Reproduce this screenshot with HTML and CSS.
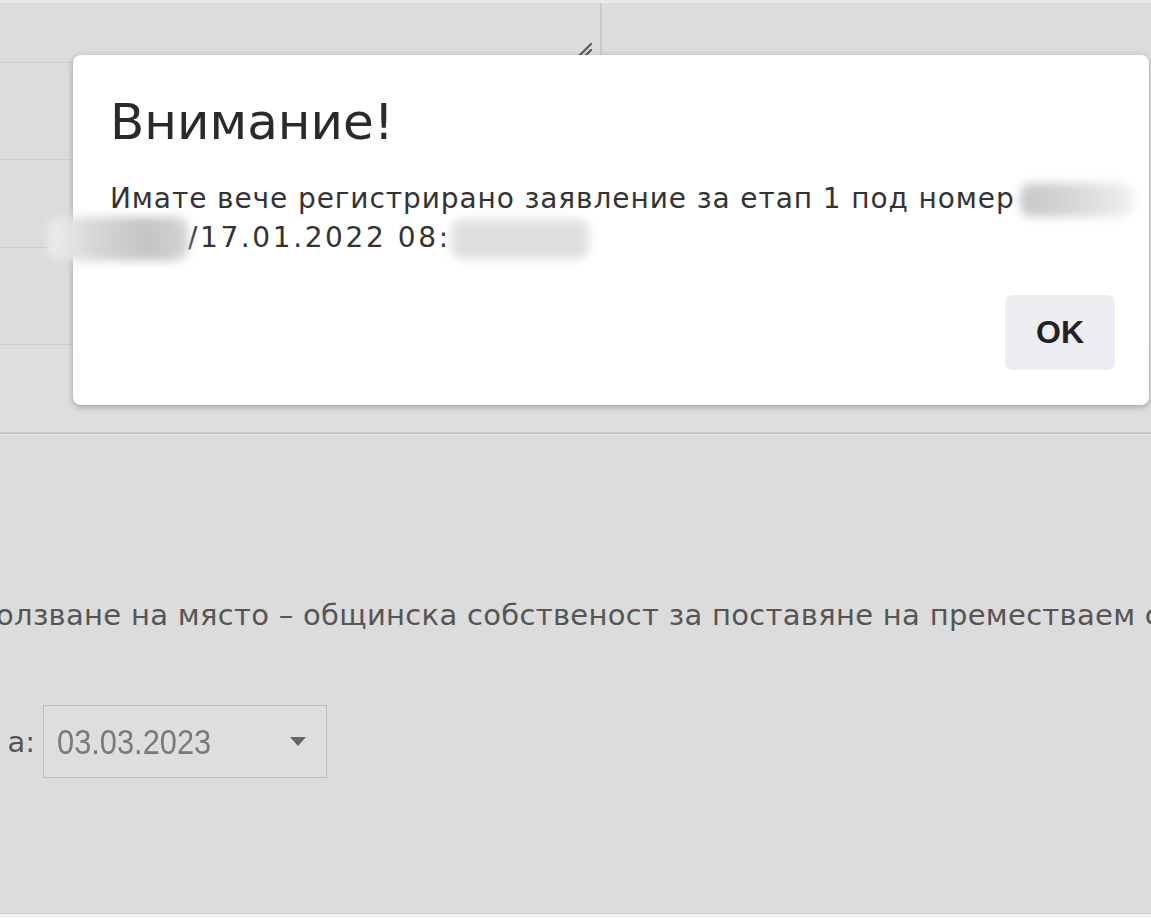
FILE: index.html
```html
<!DOCTYPE html>
<html lang="bg">
<head>
<meta charset="utf-8">
<title>Внимание</title>
<link rel="stylesheet" href="styles.css">
</head>
<body>
<div class="page">
  <div class="top-strip"></div>
  <div class="table">
    <div class="col-left">
      <div class="cell c1">
        <svg class="resize" width="18" height="18" viewBox="0 0 18 18"><path d="M3 16 L15 4 M9 16 L15 10" stroke="#5e5e5e" stroke-width="2.4" stroke-linecap="round"/></svg>
      </div>
      <div class="cell c2"></div>
      <div class="cell c3"></div>
      <div class="cell c4"></div>
    </div>
    <div class="col-right">
      <div class="rcell"></div>
    </div>
    <div class="row-last"></div>
  </div>
  <div class="divider"></div>
  <div class="content">
    <p class="desc">олзване на място – общинска собственост за поставяне на преместваем с</p>
    <div class="date-row">
      <span class="label">а:</span>
      <div class="select">
        <span class="val">03.03.2023</span>
        <span class="arrow"></span>
      </div>
    </div>
  </div>
  <div class="bottom"></div>
</div>

<div class="dialog" role="dialog">
  <h1 class="title">Внимание!</h1>
  <p class="msg">Имате вече регистрирано заявление за етап 1 под номер <span class="redact r1"></span><br><span class="redact r2"></span><span class="stamp">/17.01.2022 08:</span><span class="redact r3"></span></p>
  <div class="actions">
    <button class="ok">OK</button>
  </div>
</div>
</body>
</html>
```
FILE: styles.css
```css
html, body {
  margin: 0;
  padding: 0;
}
body {
  width: 1151px;
  height: 918px;
  overflow: hidden;
  background: #dcdcdc;
  font-family: "DejaVu Sans", "Noto Sans", sans-serif;
  position: relative;
}
.page {
  display: flex;
  flex-direction: column;
  height: 918px;
}
.top-strip {
  height: 3px;
  background: #e8e8e8;
}
.table {
  display: grid;
  grid-template-columns: 600px 1fr;
}
.col-left {
  display: flex;
  flex-direction: column;
}
.cell {
  box-sizing: border-box;
  border-bottom: 1px solid #cecece;
  position: relative;
}
.c1 { height: 60px; }
.c2 { height: 97px; }
.c3 { height: 88px; }
.c4 { height: 97px; }
.row-last {
  grid-column: 1 / 3;
  height: 87px;
  background: #dedede;
}
.resize {
  position: absolute;
  right: 6px;
  bottom: 4px;
}
.rcell {
  height: 60px;
  border-left: 2px solid #cacaca;
}
.divider {
  height: 2px;
  background: #c6c6c6;
  border-bottom: 1px solid #e6e6e6;
}
.content {
  flex: 1;
  padding-top: 160px;
  color: #555;
}
.desc {
  margin: 0 0 0 -4px;
  font-size: 29px;
  line-height: 40px;
  letter-spacing: 0.3px;
  white-space: nowrap;
}
.date-row {
  display: flex;
  align-items: center;
  gap: 8px;
  margin-top: 70px;
}
.label {
  font-size: 29px;
  margin-left: -5px;
  width: 40px;
  text-align: right;
  white-space: nowrap;
}
.select {
  box-sizing: border-box;
  width: 284px;
  height: 73px;
  border: 1px solid #bcbcbc;
  background: #dedede;
  display: flex;
  align-items: center;
  justify-content: space-between;
  padding: 0 20px 0 13px;
}
.val {
  display: inline-block;
  font-family: "Liberation Sans", Arial, sans-serif;
  font-size: 35px;
  color: #7a7a7a;
  transform: scaleX(0.88);
  transform-origin: left center;
}
.arrow {
  width: 0;
  height: 0;
  border-left: 8px solid transparent;
  border-right: 8px solid transparent;
  border-top: 9px solid #666;
}
.bottom {
  height: 4px;
  border-top: 1px solid #cfcfcf;
  background: #f3f3f3;
}

.dialog {
  position: absolute;
  left: 73px;
  top: 55px;
  width: 1076px;
  height: 350px;
  box-sizing: border-box;
  background: #fff;
  border-radius: 8px;
  box-shadow: 0 2px 6px rgba(0,0,0,0.28);
  padding: 37px 34px 35px 37px;
  display: flex;
  flex-direction: column;
}
.title {
  margin: 0;
  font-weight: normal;
  font-size: 50px;
  line-height: 60px;
  color: #2a2a2a;
}
.msg {
  margin: 28px 0 0;
  font-size: 28px;
  line-height: 37px;
  letter-spacing: 0.9px;
  color: #333;
  white-space: nowrap;
}
.stamp {
  letter-spacing: 2.6px;
}
.redact {
  display: inline-block;
  height: 34px;
  vertical-align: middle;
  filter: blur(5px);
  border-radius: 12px;
}
.r1 {
  width: 112px;
  margin-left: -4px;
  background: linear-gradient(to right, #c8c8c8 0%, #d2d2d2 35%, #efefef 100%);
}
.r2 {
  width: 140px;
  margin-left: -62px;
  height: 44px;
  background: linear-gradient(to right, #ededed 0%, #d6d6d6 35%, #c4c4c4 70%, #d4d4d4 100%);
}
.r3 {
  width: 138px;
  height: 40px;
  background: #dfdfdf;
}
.actions {
  margin-top: auto;
  display: flex;
  justify-content: flex-end;
}
.ok {
  width: 110px;
  height: 75px;
  border: none;
  border-radius: 8px;
  background: #eceef1;
  font-family: "Liberation Sans", Arial, sans-serif;
  font-weight: bold;
  font-size: 32px;
  color: #222;
  padding: 0;
}
```
